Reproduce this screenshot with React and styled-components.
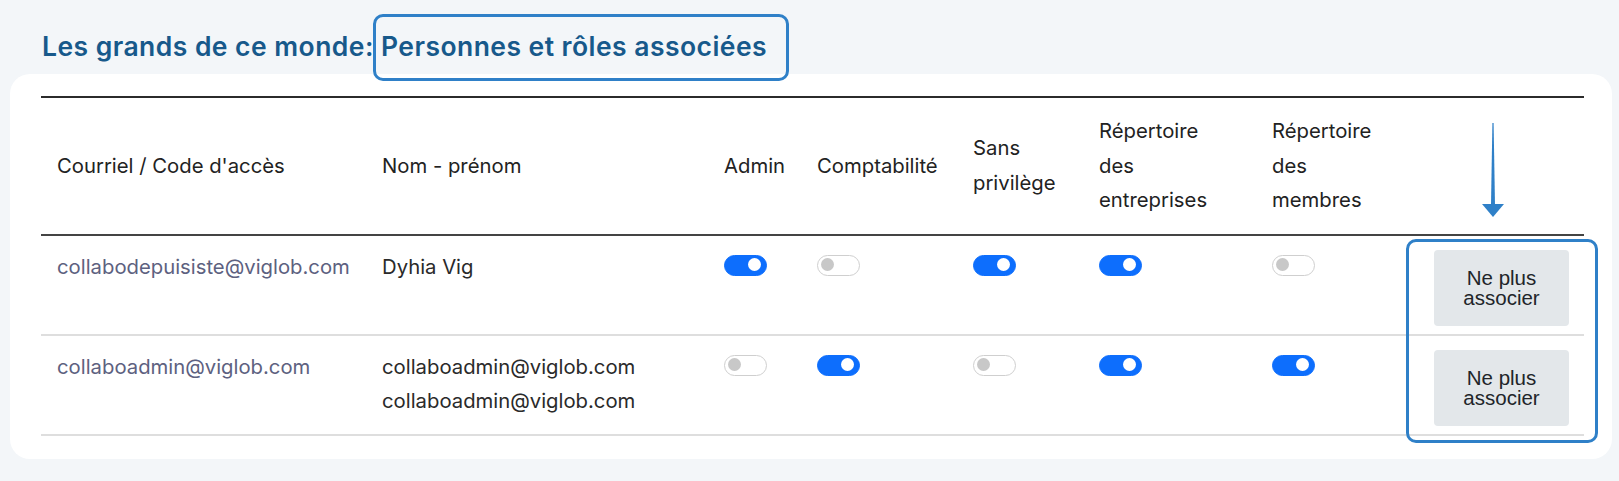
import React from 'react'
import styled, { createGlobalStyle } from 'styled-components'

const columns = [
  { key: 'email', width: 325, lines: ['Courriel / Code d\'accès'] },
  { key: 'name', width: 342, lines: ['Nom - prénom'] },
  { key: 'admin', width: 93, lines: ['Admin'] },
  { key: 'compta', width: 156, lines: ['Comptabilité'] },
  { key: 'none', width: 126, lines: ['Sans', 'privilège'] },
  { key: 'repEnt', width: 173, lines: ['Répertoire', 'des', 'entreprises'] },
  { key: 'repMem', width: 162, lines: ['Répertoire', 'des', 'membres'] },
  { key: 'action', width: 166, lines: [] },
]

const rows = [
  {
    email: 'collabodepuisiste@viglob.com',
    names: ['Dyhia Vig'],
    roles: [true, false, true, true, false],
  },
  {
    email: 'collaboadmin@viglob.com',
    names: ['collaboadmin@viglob.com', 'collaboadmin@viglob.com'],
    roles: [false, true, false, true, true],
  },
]

const Roles = () => {
  const [data, setData] = React.useState(rows)

  const flip = (r, i) => {
    setData(data.map((row, idx) => idx !== r ? row : {
      ...row,
      roles: row.roles.map((v, j) => (j === i ? !v : v)),
    }))
  }

  return (
    <Page>
      <GlobalStyle />
      <Title>
        Les grands de ce monde: <Marked>Personnes et rôles associées</Marked>
      </Title>
      <Card>
        <Table>
          <colgroup>
            {columns.map((c) => (
              <col key={c.key} style={{ width: c.width }} />
            ))}
          </colgroup>
          <thead>
            <tr>
              {columns.map((c) => (
                <Th key={c.key}>
                  {c.key === 'action' ? (
                    <Arrow width="22" height="94" viewBox="0 0 22 94">
                      <polygon points="10.4,0 11.6,0 13,82 9,82" fill="#2f80c8" />
                      <polygon points="0,81 22,81 11,94" fill="#2f80c8" />
                    </Arrow>
                  ) : (
                    c.lines.map((l) => <Line key={l}>{l}</Line>)
                  )}
                </Th>
              ))}
            </tr>
          </thead>
          <tbody>
            {data.map((row, r) => (
              <tr key={row.email}>
                <Td muted>{row.email}</Td>
                <Td>
                  {row.names.map((n, i) => (
                    <Line key={i}>{n}</Line>
                  ))}
                </Td>
                {row.roles.map((on, i) => (
                  <Td key={i}>
                    <Switch on={on} onClick={() => flip(r, i)} />
                  </Td>
                ))}
                <Td>
                  <Button>Ne plus<br />associer</Button>
                </Td>
              </tr>
            ))}
          </tbody>
        </Table>
        <ColumnMark />
      </Card>
    </Page>
  )
}

export default function App() {
  return <Roles />
}

const GlobalStyle = createGlobalStyle`
body{
  margin: 0;
  background-color: #f3f6f9;
  font-family: Inter, "Noto Sans", sans-serif;
}
`

const Page = styled.div`
width: 1602px;
padding: 0 7px 0 10px;
`

const Title = styled.h2`
position: relative;
z-index: 1;
margin: 0;
padding: 28px 0 10px 32px;
font-size: 26.5px;
letter-spacing: 0.45px;
line-height: 36px;
font-weight: 600;
color: #17598b;
white-space: nowrap;
`

const Marked = styled.span`
position: relative;
&::after{
  content: '';
  position: absolute;
  left: -8px;
  right: -22px;
  top: -16px;
  bottom: -19px;
  border: 3px solid #2f80c8;
  border-radius: 10px;
}
`

const Card = styled.section`
position: relative;
background-color: white;
border-radius: 20px;
padding: 22px 28px 23px 31px;
`

const Table = styled.table`
width: 1543px;
table-layout: fixed;
border-collapse: collapse;
border-top: 2px solid #2b2b2b;
font-size: 20.3px;
color: #222;
`

const Th = styled.th`
text-align: left;
font-weight: 400;
vertical-align: middle;
padding: 16px 16px 16px;
line-height: 34.5px;
border-bottom: 2px solid #444;
`

const Td = styled.td`
vertical-align: top;
padding: 14px 16px 8px;
line-height: 34.5px;
color: ${({ muted }) => (muted ? '#5d6180' : '#2a2a2a')};
border-bottom: 2px solid #dedede;
`

const Line = styled.div`
white-space: nowrap;
`

const Arrow = styled.svg`
display: block;
margin: 8px 0 0 48px;
`

const Switch = styled.div`
position: relative;
width: 43px;
height: 21px;
margin-top: 5px;
box-sizing: border-box;
border-radius: 11px;
cursor: pointer;
background-color: ${({ on }) => (on ? '#0d6efd' : 'white')};
border: 1.5px solid ${({ on }) => (on ? '#0d6efd' : '#cfcfcf')};
&::after{
  content: '';
  position: absolute;
  top: 2.5px;
  left: ${({ on }) => (on ? '23px' : '3px')};
  width: 13px;
  height: 13px;
  border-radius: 50%;
  background-color: ${({ on }) => (on ? 'white' : '#c8c8c8')};
}
`

const Button = styled.div`
width: 135px;
height: 76px;
display: flex;
align-items: center;
justify-content: center;
text-align: center;
background-color: #e3e7ea;
border-radius: 4px;
font-family: "Liberation Sans", Arial, sans-serif;
font-size: 20.5px;
line-height: 20px;
color: #212529;
cursor: pointer;
`

const ColumnMark = styled.div`
position: absolute;
left: 1396px;
top: 165px;
width: 192px;
height: 204px;
box-sizing: border-box;
border: 3px solid #2f80c8;
border-radius: 10px;
pointer-events: none;
`
